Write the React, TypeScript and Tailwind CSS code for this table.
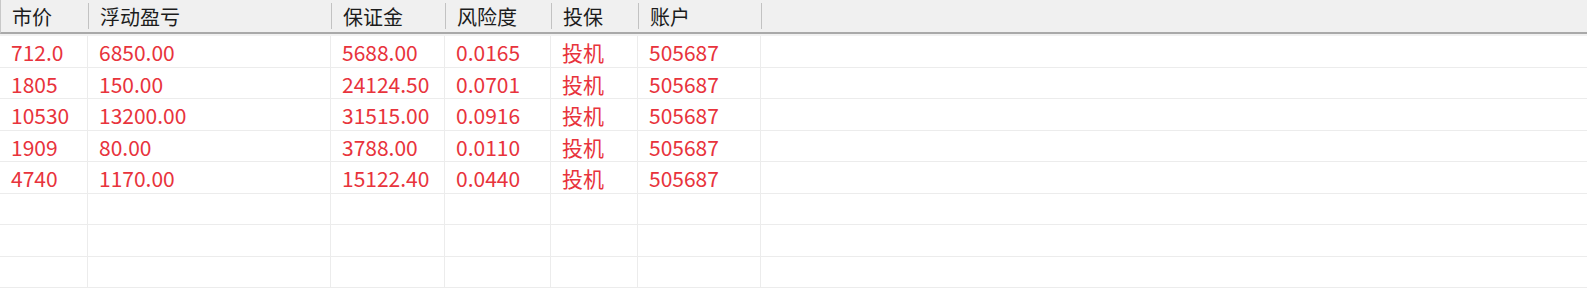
import React from 'react';

const columns = ['市价', '浮动盈亏', '保证金', '风险度', '投保', '账户'];

const rows: string[][] = [
  ['712.0', '6850.00', '5688.00', '0.0165', '投机', '505687'],
  ['1805', '150.00', '24124.50', '0.0701', '投机', '505687'],
  ['10530', '13200.00', '31515.00', '0.0916', '投机', '505687'],
  ['1909', '80.00', '3788.00', '0.0110', '投机', '505687'],
  ['4740', '1170.00', '15122.40', '0.0440', '投机', '505687'],
  ['', '', '', '', '', ''],
  ['', '', '', '', '', ''],
  ['', '', '', '', '', ''],
];

const gridCols = 'grid grid-cols-[88px_243px_114px_106px_87px_123px_1fr]';

export default function App() {
  return (
    <div
      className="w-[1587px] h-[294px] overflow-hidden bg-white text-[21px] leading-none"
      style={{ fontFamily: '"Noto Sans CJK SC", "Noto Sans", sans-serif' }}
    >
      {/* header */}
      <div className={`${gridCols} h-[34px] bg-[#f0f0f0] border-b-2 border-[#a9a9a9] border-l border-l-[#c8c8c8]`}>
        {columns.map((c) => (
          <div
            key={c}
            className="relative flex items-center pl-[11px] pt-[2px] text-[20px] text-[#1c1c1c] after:absolute after:right-0 after:top-[3px] after:bottom-[3px] after:w-px after:bg-[#c2c2c2]"
          >
            {c}
          </div>
        ))}
        <div />
      </div>
      <div className="h-[2px] bg-[#f1f1f1]" />

      {/* body */}
      {rows.map((r, i) => (
        <div key={i} className={`${gridCols} h-[31.5px] border-b border-[#ececec]`}>
          {r.map((v, j) => (
            <div key={j} className="flex items-center pl-[11px] pt-[3px] text-[#e8333c] border-r border-[#ececec]">
              {v}
            </div>
          ))}
          <div />
        </div>
      ))}
    </div>
  );
}
